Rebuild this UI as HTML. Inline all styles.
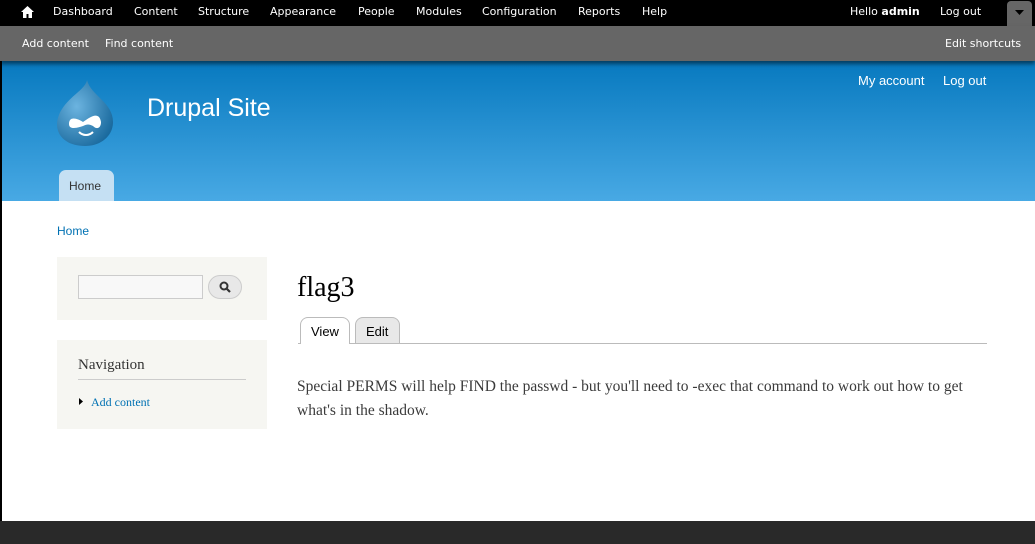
<!DOCTYPE html>
<html><head><meta charset="utf-8"><style>
*{margin:0;padding:0;box-sizing:border-box}
body{width:1035px;height:544px;overflow:hidden;background:#fff;font-family:"DejaVu Sans","Liberation Sans",sans-serif;position:relative}
.abs{position:absolute}
#tb{left:0;top:0;width:1035px;height:26px;background:#000;color:#fff;font-size:11px}
#tb span{position:absolute;top:5px}
#sc{left:0;top:26px;width:1035px;height:35px;background:#666;color:#fff;font-size:11px;box-shadow:0 3px 4px rgba(0,0,0,.5)}
#sc span{position:absolute;top:11px}
#hd{left:2px;top:61px;width:1033px;height:140px;background:linear-gradient(#0779bf,#48a9e4)}
.ser{font-family:"Liberation Serif","DejaVu Serif",serif}
.ls{font-family:"Liberation Sans",sans-serif}
</style></head><body>
<div class="abs" style="left:0;top:0;width:2px;height:544px;background:#000"></div>
<div id="hd" class="abs"></div>
<div id="tb" class="abs">
<svg class="abs" style="left:21px;top:6px" width="13" height="12" viewBox="0 0 13 12"><path d="M6.5 0L0 6h2v6h3.5V8h2v4H11V6h2z" fill="#fff"/></svg>
<span style="left:53px">Dashboard</span><span style="left:134px">Content</span><span style="left:198px">Structure</span><span style="left:270px">Appearance</span><span style="left:358px">People</span><span style="left:416px">Modules</span><span style="left:482px">Configuration</span><span style="left:578px">Reports</span><span style="left:642px">Help</span>
<span style="left:850px">Hello <b>admin</b></span><span style="left:940px">Log out</span>
</div>
<div class="abs" style="left:1007px;top:1px;width:25px;height:26px;background:#666;border-radius:4px 4px 0 0"></div>
<svg class="abs" style="left:1015px;top:10px" width="9" height="5"><path d="M0 0h9L4.5 5z" fill="#000"/></svg>
<div id="sc" class="abs"><span style="left:22px">Add content</span><span style="left:105px">Find content</span><span style="left:945px">Edit shortcuts</span></div>
<div class="abs ls" style="left:858px;top:73px;color:#fff;font-size:13px">My account</div>
<div class="abs ls" style="left:943px;top:73px;color:#fff;font-size:13px">Log out</div>
<svg class="abs" style="left:55px;top:80px" width="60" height="67" viewBox="0 0 60 67">
<defs><radialGradient id="g" cx=".35" cy=".4" r=".7"><stop offset="0" stop-color="#6cb4e0"/><stop offset="1" stop-color="#1a6a9e"/></radialGradient></defs>
<path d="M32 0C30 12 4 20 2 44C2 58 14 66 30 66C46 66 58 56 58 42C58 22 36 16 32 0Z" fill="url(#g)"/>
<path d="M14 44C14 36 22 38 28 42C34 38 44 30 46 42C46 48 42 50 38 46C34 44 32 44 28 46C22 48 14 50 14 44Z" fill="#fff"/>
<path d="M24 52C28 56 34 56 38 52" stroke="#fff" stroke-width="2" fill="none"/>
</svg>
<div class="abs ls" style="left:147px;top:94px;color:#fff;font-size:25px">Drupal Site</div>
<div class="abs ls" style="left:59px;top:170px;width:55px;height:31px;background:#c5e0f3;border-radius:7px 7px 0 0;color:#333;font-size:12px;padding:9px 0 0 10px">Home</div>
<div class="abs ls" style="left:57px;top:224px;color:#0071b3;font-size:12px">Home</div>
<div class="abs" style="left:57px;top:257px;width:210px;height:63px;background:#f6f6f2"></div>
<div class="abs" style="left:78px;top:275px;width:125px;height:24px;background:#f8f8f8;border:1px solid #ccc"></div>
<div class="abs" style="left:208px;top:275px;width:34px;height:24px;background:#e8e8e8;border:1px solid #ccc;border-radius:12px"></div>
<svg class="abs" style="left:219px;top:281px" width="12" height="12"><circle cx="5" cy="5" r="3.5" stroke="#333" stroke-width="2" fill="none"/><path d="M7.5 7.5L11 11" stroke="#333" stroke-width="2.2"/></svg>
<div class="abs" style="left:57px;top:340px;width:210px;height:89px;background:#f6f6f2"></div>
<div class="abs ser" style="left:78px;top:357px;font-size:15px;color:#333">Navigation</div>
<div class="abs" style="left:78px;top:379px;width:168px;height:1px;background:#ccc"></div>
<svg class="abs" style="left:79px;top:398px" width="4" height="7"><path d="M0 0L4 3.5L0 7z" fill="#000"/></svg>
<div class="abs ser" style="left:91px;top:395px;font-size:12px;color:#0071b3">Add content</div>
<div class="abs ser" style="left:297px;top:272px;font-size:28px;color:#000">flag3</div>
<div class="abs" style="left:298px;top:343px;width:689px;height:1px;background:#bbb"></div>
<div class="abs ls" style="left:300px;top:317px;width:50px;height:27px;background:#fff;border:1px solid #bbb;border-bottom:none;border-radius:8px 8px 0 0;font-size:13px;padding:6px 0 0 10px;color:#000">View</div>
<div class="abs ls" style="left:355px;top:317px;width:45px;height:26px;background:#e8e8e8;border:1px solid #bbb;border-bottom:none;border-radius:8px 8px 0 0;font-size:13px;padding:6px 0 0 10px;color:#000">Edit</div>
<div class="abs ser" style="left:297px;top:375px;width:680px;font-size:15.5px;line-height:24px;color:#3b3b3b">Special PERMS will help FIND the passwd - but you'll need to -exec that command to work out how to get what's in the shadow.</div>
<div class="abs" style="left:0;top:521px;width:1035px;height:23px;background:#292929"></div>
</body></html>
